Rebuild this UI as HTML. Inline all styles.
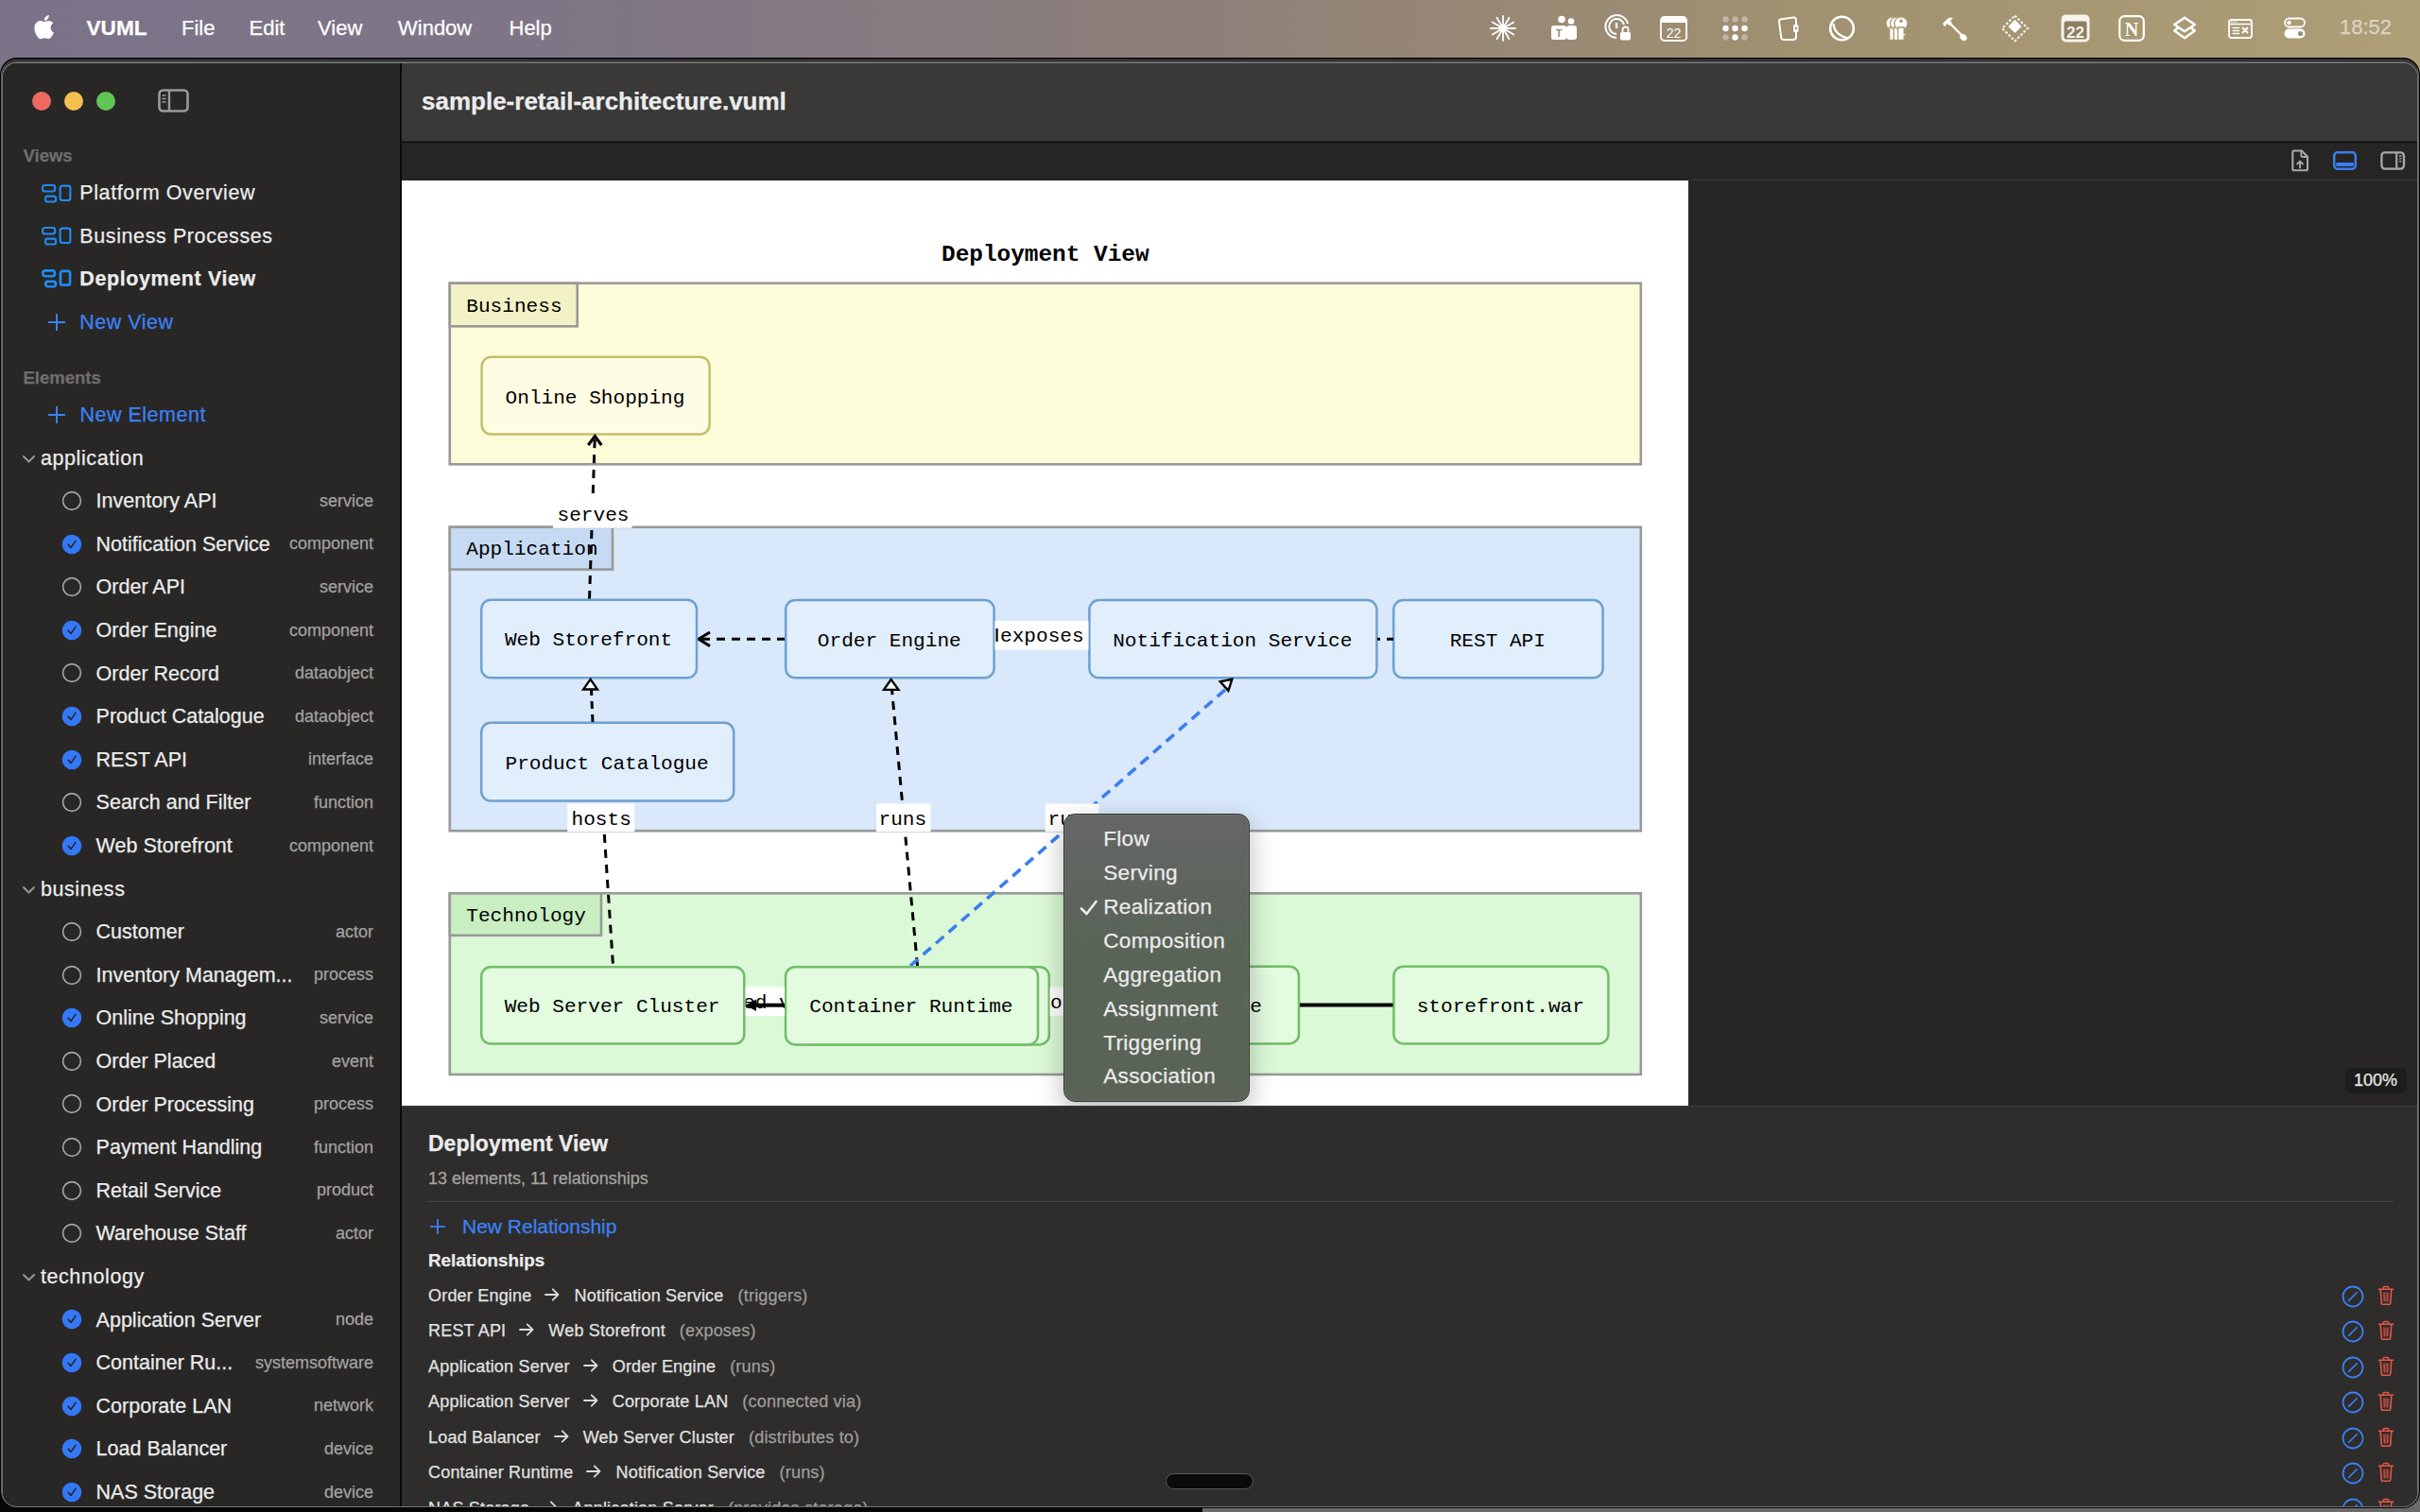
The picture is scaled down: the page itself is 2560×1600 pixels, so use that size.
<!DOCTYPE html><html><head><meta charset="utf-8"><title>VUML</title><style>
html,body{margin:0;padding:0;}
body{width:2560px;height:1600px;overflow:hidden;position:relative;background:#6b6b6b;font-family:"Liberation Sans",sans-serif;}
.t{position:absolute;white-space:pre;-webkit-text-stroke:0.25px currentColor;}
.r{position:absolute;box-sizing:border-box;}
svg{position:absolute;overflow:visible;}
</style></head><body>
<div class="r" style="left:0px;top:0px;width:2560px;height:90px;background:linear-gradient(90deg,#7a7388 0%,#7f7686 25%,#8e8079 50%,#a19170 75%,#ae9f77 100%);"></div>
<svg style="left:34px;top:15px" width="24" height="27" viewBox="0 0 24 27"><path fill="#fff" d="M19.6 14.3c0-3.2 2.6-4.7 2.7-4.8-1.5-2.2-3.8-2.5-4.6-2.5-2-.2-3.8 1.2-4.8 1.2-1 0-2.5-1.1-4.2-1.1-2.1 0-4.1 1.3-5.2 3.2-2.2 3.9-.6 9.6 1.6 12.7 1.1 1.5 2.3 3.2 4 3.2 1.6-.1 2.2-1 4.1-1s2.5 1 4.2 1c1.7 0 2.8-1.6 3.8-3.1 1.2-1.8 1.7-3.5 1.7-3.6 0 0-3.3-1.3-3.3-5.2zM16.5 5c.9-1.1 1.5-2.5 1.3-4-1.3.1-2.8.9-3.7 1.9-.8.9-1.5 2.4-1.3 3.9 1.4.1 2.8-.7 3.7-1.8z"/></svg>
<div class="t" style="top:17.35px;font-size:22.6px;line-height:1.117;color:#fff;font-weight:700;font-family:'Liberation Sans', sans-serif;left:91.50px;">VUML</div>
<div class="t" style="top:17.89px;font-size:22px;line-height:1.117;color:#fff;font-weight:400;font-family:'Liberation Sans', sans-serif;left:192.00px;">File</div>
<div class="t" style="top:17.89px;font-size:22px;line-height:1.117;color:#fff;font-weight:400;font-family:'Liberation Sans', sans-serif;left:263.50px;">Edit</div>
<div class="t" style="top:17.89px;font-size:22px;line-height:1.117;color:#fff;font-weight:400;font-family:'Liberation Sans', sans-serif;left:336.00px;">View</div>
<div class="t" style="top:17.89px;font-size:22px;line-height:1.117;color:#fff;font-weight:400;font-family:'Liberation Sans', sans-serif;left:421.00px;">Window</div>
<div class="t" style="top:17.89px;font-size:22px;line-height:1.117;color:#fff;font-weight:400;font-family:'Liberation Sans', sans-serif;left:538.50px;">Help</div>
<div class="t" style="top:16.79px;font-size:22px;line-height:1.117;color:rgba(255,255,255,0.55);font-weight:400;font-family:'Liberation Sans', sans-serif;right:30.00px;text-align:right;">18:52</div>
<div class="r" style="left:0px;top:1540px;width:1272px;height:60px;background:#060606;"></div>
<div class="r" style="left:0px;top:61px;width:2560px;height:1535px;background:#050505;border-radius:18px 18px 18px 18px;"></div>
<div class="r" style="left:1px;top:62.6px;width:2557.5px;height:1532px;background:#626262;border-radius:17px;"></div>
<div class="r" style="left:2px;top:63.6px;width:2556px;height:1530.9px;background:#080808;border-radius:16px;"></div>
<div class="r" style="left:2px;top:65.2px;width:2556px;height:1529.8px;background:#707070;border-radius:16px;"></div>
<div style="position:absolute;left:3px;top:67px;width:2554px;height:1527px;border-radius:15px;overflow:hidden;background:#282726;">
<div style="position:absolute;left:-3px;top:-67px;width:2560px;height:1600px;">
<div class="r" style="left:0px;top:0px;width:423px;height:1600px;background:#282726;"></div>
<div class="r" style="left:423px;top:60px;width:2px;height:1540px;background:#0a0a0a;"></div>
<div class="r" style="left:34px;top:97px;width:20px;height:20px;border-radius:50%;background:#ec6a5f;"></div>
<div class="r" style="left:68px;top:97px;width:20px;height:20px;border-radius:50%;background:#f4bf4f;"></div>
<div class="r" style="left:102px;top:97px;width:20px;height:20px;border-radius:50%;background:#61c555;"></div>
<svg style="left:166px;top:93px" width="36" height="28" viewBox="0 0 36 28"><rect x="2.5" y="2.5" width="30" height="22" rx="4" fill="none" stroke="#9b9b9b" stroke-width="2.6"/><line x1="13" y1="2.5" x2="13" y2="24.5" stroke="#9b9b9b" stroke-width="2.4"/><line x1="5.5" y1="8" x2="9.5" y2="8" stroke="#9b9b9b" stroke-width="1.6"/><line x1="5.5" y1="11.5" x2="9.5" y2="11.5" stroke="#9b9b9b" stroke-width="1.6"/><line x1="5.5" y1="15" x2="9.5" y2="15" stroke="#9b9b9b" stroke-width="1.6"/></svg>
<div class="t" style="top:155.06px;font-size:18.5px;line-height:1.117;color:#6f6e6d;font-weight:700;font-family:'Liberation Sans', sans-serif;left:24.50px;">Views</div>
<svg style="left:43.8px;top:194.6px" width="34" height="22" viewBox="0 0 34 22"><rect x="1.05" y="1.05" width="13.10" height="6.50" rx="2.2" fill="none" stroke="#1f8bf5" stroke-width="2.1"/><rect x="4.05" y="12.65" width="11.10" height="5.90" rx="2.2" fill="none" stroke="#1f8bf5" stroke-width="2.1"/><rect x="19.65" y="1.65" width="10.70" height="15.30" rx="2.2" fill="none" stroke="#1f8bf5" stroke-width="2.1"/></svg>
<div class="t" style="top:192.44px;font-size:21.5px;line-height:1.117;color:#ececec;font-weight:400;font-family:'Liberation Sans', sans-serif;letter-spacing:0.6px;left:84.30px;">Platform Overview</div>
<svg style="left:43.8px;top:240.0px" width="34" height="22" viewBox="0 0 34 22"><rect x="1.05" y="1.05" width="13.10" height="6.50" rx="2.2" fill="none" stroke="#1f8bf5" stroke-width="2.1"/><rect x="4.05" y="12.65" width="11.10" height="5.90" rx="2.2" fill="none" stroke="#1f8bf5" stroke-width="2.1"/><rect x="19.65" y="1.65" width="10.70" height="15.30" rx="2.2" fill="none" stroke="#1f8bf5" stroke-width="2.1"/></svg>
<div class="t" style="top:237.84px;font-size:21.5px;line-height:1.117;color:#ececec;font-weight:400;font-family:'Liberation Sans', sans-serif;letter-spacing:0.6px;left:84.30px;">Business Processes</div>
<svg style="left:43.8px;top:285.4px" width="34" height="22" viewBox="0 0 34 22"><rect x="1.35" y="1.35" width="12.50" height="5.90" rx="2.2" fill="none" stroke="#1f8bf5" stroke-width="2.7"/><rect x="4.35" y="12.95" width="10.50" height="5.30" rx="2.2" fill="none" stroke="#1f8bf5" stroke-width="2.7"/><rect x="19.95" y="1.95" width="10.10" height="14.70" rx="2.2" fill="none" stroke="#1f8bf5" stroke-width="2.7"/></svg>
<div class="t" style="top:283.24px;font-size:21.5px;line-height:1.117;color:#ececec;font-weight:700;font-family:'Liberation Sans', sans-serif;letter-spacing:0.6px;left:84.30px;">Deployment View</div>
<svg style="left:51px;top:332.0px" width="18" height="18" viewBox="0 0 18 18"><line x1="9.0" y1="0" x2="9.0" y2="18" stroke="#3b82f6" stroke-width="2"/><line x1="0" y1="9.0" x2="18" y2="9.0" stroke="#3b82f6" stroke-width="2"/></svg>
<div class="t" style="top:329.04px;font-size:21.5px;line-height:1.117;color:#3b82f6;font-weight:400;font-family:'Liberation Sans', sans-serif;letter-spacing:0.5px;left:84.30px;">New View</div>
<div class="t" style="top:390.06px;font-size:18.5px;line-height:1.117;color:#6f6e6d;font-weight:700;font-family:'Liberation Sans', sans-serif;left:24.50px;">Elements</div>
<svg style="left:51px;top:429.5px" width="18" height="18" viewBox="0 0 18 18"><line x1="9.0" y1="0" x2="9.0" y2="18" stroke="#3b82f6" stroke-width="2"/><line x1="0" y1="9.0" x2="18" y2="9.0" stroke="#3b82f6" stroke-width="2"/></svg>
<div class="t" style="top:426.54px;font-size:21.5px;line-height:1.117;color:#3b82f6;font-weight:400;font-family:'Liberation Sans', sans-serif;letter-spacing:0.5px;left:84.50px;">New Element</div>
<svg style="left:23px;top:481.0px" width="16" height="10" viewBox="0 0 16 10"><polyline points="2,2 7.5,7.5 13,2" fill="none" stroke="#9a9a9a" stroke-width="1.9" stroke-linecap="round" stroke-linejoin="round"/></svg>
<div class="t" style="top:472.54px;font-size:21.5px;line-height:1.117;color:#ececec;font-weight:400;font-family:'Liberation Sans', sans-serif;letter-spacing:0.6px;left:42.90px;">application</div>
<svg style="left:65px;top:519.0px" width="22" height="22" viewBox="0 0 22 22"><circle cx="11" cy="11" r="9.4" fill="none" stroke="#a6a6a6" stroke-width="1.6"/></svg>
<div class="t" style="top:518.14px;font-size:21.5px;line-height:1.117;color:#ececec;font-weight:400;font-family:'Liberation Sans', sans-serif;left:101.60px;">Inventory API</div>
<div class="t" style="top:519.81px;font-size:18px;line-height:1.117;color:#a3a2a1;font-weight:400;font-family:'Liberation Sans', sans-serif;right:2165.00px;text-align:right;">service</div>
<svg style="left:65px;top:564.6px" width="22" height="22" viewBox="0 0 22 22"><circle cx="11" cy="11" r="10.3" fill="#3478f6"/><polyline points="7.2,11.4 10.1,14.4 15,7.4" fill="none" stroke="#262524" stroke-width="1.6" stroke-linecap="round" stroke-linejoin="round"/></svg>
<div class="t" style="top:563.74px;font-size:21.5px;line-height:1.117;color:#ececec;font-weight:400;font-family:'Liberation Sans', sans-serif;left:101.60px;">Notification Service</div>
<div class="t" style="top:565.41px;font-size:18px;line-height:1.117;color:#a3a2a1;font-weight:400;font-family:'Liberation Sans', sans-serif;right:2165.00px;text-align:right;">component</div>
<svg style="left:65px;top:610.2px" width="22" height="22" viewBox="0 0 22 22"><circle cx="11" cy="11" r="9.4" fill="none" stroke="#a6a6a6" stroke-width="1.6"/></svg>
<div class="t" style="top:609.34px;font-size:21.5px;line-height:1.117;color:#ececec;font-weight:400;font-family:'Liberation Sans', sans-serif;left:101.60px;">Order API</div>
<div class="t" style="top:611.01px;font-size:18px;line-height:1.117;color:#a3a2a1;font-weight:400;font-family:'Liberation Sans', sans-serif;right:2165.00px;text-align:right;">service</div>
<svg style="left:65px;top:655.8px" width="22" height="22" viewBox="0 0 22 22"><circle cx="11" cy="11" r="10.3" fill="#3478f6"/><polyline points="7.2,11.4 10.1,14.4 15,7.4" fill="none" stroke="#262524" stroke-width="1.6" stroke-linecap="round" stroke-linejoin="round"/></svg>
<div class="t" style="top:654.94px;font-size:21.5px;line-height:1.117;color:#ececec;font-weight:400;font-family:'Liberation Sans', sans-serif;left:101.60px;">Order Engine</div>
<div class="t" style="top:656.61px;font-size:18px;line-height:1.117;color:#a3a2a1;font-weight:400;font-family:'Liberation Sans', sans-serif;right:2165.00px;text-align:right;">component</div>
<svg style="left:65px;top:701.4px" width="22" height="22" viewBox="0 0 22 22"><circle cx="11" cy="11" r="9.4" fill="none" stroke="#a6a6a6" stroke-width="1.6"/></svg>
<div class="t" style="top:700.54px;font-size:21.5px;line-height:1.117;color:#ececec;font-weight:400;font-family:'Liberation Sans', sans-serif;left:101.60px;">Order Record</div>
<div class="t" style="top:702.21px;font-size:18px;line-height:1.117;color:#a3a2a1;font-weight:400;font-family:'Liberation Sans', sans-serif;right:2165.00px;text-align:right;">dataobject</div>
<svg style="left:65px;top:747.0px" width="22" height="22" viewBox="0 0 22 22"><circle cx="11" cy="11" r="10.3" fill="#3478f6"/><polyline points="7.2,11.4 10.1,14.4 15,7.4" fill="none" stroke="#262524" stroke-width="1.6" stroke-linecap="round" stroke-linejoin="round"/></svg>
<div class="t" style="top:746.14px;font-size:21.5px;line-height:1.117;color:#ececec;font-weight:400;font-family:'Liberation Sans', sans-serif;left:101.60px;">Product Catalogue</div>
<div class="t" style="top:747.81px;font-size:18px;line-height:1.117;color:#a3a2a1;font-weight:400;font-family:'Liberation Sans', sans-serif;right:2165.00px;text-align:right;">dataobject</div>
<svg style="left:65px;top:792.6px" width="22" height="22" viewBox="0 0 22 22"><circle cx="11" cy="11" r="10.3" fill="#3478f6"/><polyline points="7.2,11.4 10.1,14.4 15,7.4" fill="none" stroke="#262524" stroke-width="1.6" stroke-linecap="round" stroke-linejoin="round"/></svg>
<div class="t" style="top:791.74px;font-size:21.5px;line-height:1.117;color:#ececec;font-weight:400;font-family:'Liberation Sans', sans-serif;left:101.60px;">REST API</div>
<div class="t" style="top:793.41px;font-size:18px;line-height:1.117;color:#a3a2a1;font-weight:400;font-family:'Liberation Sans', sans-serif;right:2165.00px;text-align:right;">interface</div>
<svg style="left:65px;top:838.2px" width="22" height="22" viewBox="0 0 22 22"><circle cx="11" cy="11" r="9.4" fill="none" stroke="#a6a6a6" stroke-width="1.6"/></svg>
<div class="t" style="top:837.34px;font-size:21.5px;line-height:1.117;color:#ececec;font-weight:400;font-family:'Liberation Sans', sans-serif;left:101.60px;">Search and Filter</div>
<div class="t" style="top:839.01px;font-size:18px;line-height:1.117;color:#a3a2a1;font-weight:400;font-family:'Liberation Sans', sans-serif;right:2165.00px;text-align:right;">function</div>
<svg style="left:65px;top:883.8px" width="22" height="22" viewBox="0 0 22 22"><circle cx="11" cy="11" r="10.3" fill="#3478f6"/><polyline points="7.2,11.4 10.1,14.4 15,7.4" fill="none" stroke="#262524" stroke-width="1.6" stroke-linecap="round" stroke-linejoin="round"/></svg>
<div class="t" style="top:882.94px;font-size:21.5px;line-height:1.117;color:#ececec;font-weight:400;font-family:'Liberation Sans', sans-serif;left:101.60px;">Web Storefront</div>
<div class="t" style="top:884.61px;font-size:18px;line-height:1.117;color:#a3a2a1;font-weight:400;font-family:'Liberation Sans', sans-serif;right:2165.00px;text-align:right;">component</div>
<svg style="left:23px;top:937.0px" width="16" height="10" viewBox="0 0 16 10"><polyline points="2,2 7.5,7.5 13,2" fill="none" stroke="#9a9a9a" stroke-width="1.9" stroke-linecap="round" stroke-linejoin="round"/></svg>
<div class="t" style="top:928.54px;font-size:21.5px;line-height:1.117;color:#ececec;font-weight:400;font-family:'Liberation Sans', sans-serif;letter-spacing:0.6px;left:42.90px;">business</div>
<svg style="left:65px;top:975.0px" width="22" height="22" viewBox="0 0 22 22"><circle cx="11" cy="11" r="9.4" fill="none" stroke="#a6a6a6" stroke-width="1.6"/></svg>
<div class="t" style="top:974.14px;font-size:21.5px;line-height:1.117;color:#ececec;font-weight:400;font-family:'Liberation Sans', sans-serif;left:101.60px;">Customer</div>
<div class="t" style="top:975.81px;font-size:18px;line-height:1.117;color:#a3a2a1;font-weight:400;font-family:'Liberation Sans', sans-serif;right:2165.00px;text-align:right;">actor</div>
<svg style="left:65px;top:1020.6px" width="22" height="22" viewBox="0 0 22 22"><circle cx="11" cy="11" r="9.4" fill="none" stroke="#a6a6a6" stroke-width="1.6"/></svg>
<div class="t" style="top:1019.74px;font-size:21.5px;line-height:1.117;color:#ececec;font-weight:400;font-family:'Liberation Sans', sans-serif;left:101.60px;">Inventory Managem...</div>
<div class="t" style="top:1021.41px;font-size:18px;line-height:1.117;color:#a3a2a1;font-weight:400;font-family:'Liberation Sans', sans-serif;right:2165.00px;text-align:right;">process</div>
<svg style="left:65px;top:1066.2px" width="22" height="22" viewBox="0 0 22 22"><circle cx="11" cy="11" r="10.3" fill="#3478f6"/><polyline points="7.2,11.4 10.1,14.4 15,7.4" fill="none" stroke="#262524" stroke-width="1.6" stroke-linecap="round" stroke-linejoin="round"/></svg>
<div class="t" style="top:1065.34px;font-size:21.5px;line-height:1.117;color:#ececec;font-weight:400;font-family:'Liberation Sans', sans-serif;left:101.60px;">Online Shopping</div>
<div class="t" style="top:1067.01px;font-size:18px;line-height:1.117;color:#a3a2a1;font-weight:400;font-family:'Liberation Sans', sans-serif;right:2165.00px;text-align:right;">service</div>
<svg style="left:65px;top:1111.8px" width="22" height="22" viewBox="0 0 22 22"><circle cx="11" cy="11" r="9.4" fill="none" stroke="#a6a6a6" stroke-width="1.6"/></svg>
<div class="t" style="top:1110.94px;font-size:21.5px;line-height:1.117;color:#ececec;font-weight:400;font-family:'Liberation Sans', sans-serif;left:101.60px;">Order Placed</div>
<div class="t" style="top:1112.61px;font-size:18px;line-height:1.117;color:#a3a2a1;font-weight:400;font-family:'Liberation Sans', sans-serif;right:2165.00px;text-align:right;">event</div>
<svg style="left:65px;top:1157.4px" width="22" height="22" viewBox="0 0 22 22"><circle cx="11" cy="11" r="9.4" fill="none" stroke="#a6a6a6" stroke-width="1.6"/></svg>
<div class="t" style="top:1156.54px;font-size:21.5px;line-height:1.117;color:#ececec;font-weight:400;font-family:'Liberation Sans', sans-serif;left:101.60px;">Order Processing</div>
<div class="t" style="top:1158.21px;font-size:18px;line-height:1.117;color:#a3a2a1;font-weight:400;font-family:'Liberation Sans', sans-serif;right:2165.00px;text-align:right;">process</div>
<svg style="left:65px;top:1203.0px" width="22" height="22" viewBox="0 0 22 22"><circle cx="11" cy="11" r="9.4" fill="none" stroke="#a6a6a6" stroke-width="1.6"/></svg>
<div class="t" style="top:1202.14px;font-size:21.5px;line-height:1.117;color:#ececec;font-weight:400;font-family:'Liberation Sans', sans-serif;left:101.60px;">Payment Handling</div>
<div class="t" style="top:1203.81px;font-size:18px;line-height:1.117;color:#a3a2a1;font-weight:400;font-family:'Liberation Sans', sans-serif;right:2165.00px;text-align:right;">function</div>
<svg style="left:65px;top:1248.6px" width="22" height="22" viewBox="0 0 22 22"><circle cx="11" cy="11" r="9.4" fill="none" stroke="#a6a6a6" stroke-width="1.6"/></svg>
<div class="t" style="top:1247.74px;font-size:21.5px;line-height:1.117;color:#ececec;font-weight:400;font-family:'Liberation Sans', sans-serif;left:101.60px;">Retail Service</div>
<div class="t" style="top:1249.41px;font-size:18px;line-height:1.117;color:#a3a2a1;font-weight:400;font-family:'Liberation Sans', sans-serif;right:2165.00px;text-align:right;">product</div>
<svg style="left:65px;top:1294.2px" width="22" height="22" viewBox="0 0 22 22"><circle cx="11" cy="11" r="9.4" fill="none" stroke="#a6a6a6" stroke-width="1.6"/></svg>
<div class="t" style="top:1293.34px;font-size:21.5px;line-height:1.117;color:#ececec;font-weight:400;font-family:'Liberation Sans', sans-serif;left:101.60px;">Warehouse Staff</div>
<div class="t" style="top:1295.01px;font-size:18px;line-height:1.117;color:#a3a2a1;font-weight:400;font-family:'Liberation Sans', sans-serif;right:2165.00px;text-align:right;">actor</div>
<svg style="left:23px;top:1347.4px" width="16" height="10" viewBox="0 0 16 10"><polyline points="2,2 7.5,7.5 13,2" fill="none" stroke="#9a9a9a" stroke-width="1.9" stroke-linecap="round" stroke-linejoin="round"/></svg>
<div class="t" style="top:1338.94px;font-size:21.5px;line-height:1.117;color:#ececec;font-weight:400;font-family:'Liberation Sans', sans-serif;letter-spacing:0.6px;left:42.90px;">technology</div>
<svg style="left:65px;top:1385.4px" width="22" height="22" viewBox="0 0 22 22"><circle cx="11" cy="11" r="10.3" fill="#3478f6"/><polyline points="7.2,11.4 10.1,14.4 15,7.4" fill="none" stroke="#262524" stroke-width="1.6" stroke-linecap="round" stroke-linejoin="round"/></svg>
<div class="t" style="top:1384.54px;font-size:21.5px;line-height:1.117;color:#ececec;font-weight:400;font-family:'Liberation Sans', sans-serif;left:101.60px;">Application Server</div>
<div class="t" style="top:1386.21px;font-size:18px;line-height:1.117;color:#a3a2a1;font-weight:400;font-family:'Liberation Sans', sans-serif;right:2165.00px;text-align:right;">node</div>
<svg style="left:65px;top:1431.0px" width="22" height="22" viewBox="0 0 22 22"><circle cx="11" cy="11" r="10.3" fill="#3478f6"/><polyline points="7.2,11.4 10.1,14.4 15,7.4" fill="none" stroke="#262524" stroke-width="1.6" stroke-linecap="round" stroke-linejoin="round"/></svg>
<div class="t" style="top:1430.14px;font-size:21.5px;line-height:1.117;color:#ececec;font-weight:400;font-family:'Liberation Sans', sans-serif;left:101.60px;">Container Ru...</div>
<div class="t" style="top:1431.81px;font-size:18px;line-height:1.117;color:#a3a2a1;font-weight:400;font-family:'Liberation Sans', sans-serif;right:2165.00px;text-align:right;">systemsoftware</div>
<svg style="left:65px;top:1476.6px" width="22" height="22" viewBox="0 0 22 22"><circle cx="11" cy="11" r="10.3" fill="#3478f6"/><polyline points="7.2,11.4 10.1,14.4 15,7.4" fill="none" stroke="#262524" stroke-width="1.6" stroke-linecap="round" stroke-linejoin="round"/></svg>
<div class="t" style="top:1475.74px;font-size:21.5px;line-height:1.117;color:#ececec;font-weight:400;font-family:'Liberation Sans', sans-serif;left:101.60px;">Corporate LAN</div>
<div class="t" style="top:1477.41px;font-size:18px;line-height:1.117;color:#a3a2a1;font-weight:400;font-family:'Liberation Sans', sans-serif;right:2165.00px;text-align:right;">network</div>
<svg style="left:65px;top:1522.2px" width="22" height="22" viewBox="0 0 22 22"><circle cx="11" cy="11" r="10.3" fill="#3478f6"/><polyline points="7.2,11.4 10.1,14.4 15,7.4" fill="none" stroke="#262524" stroke-width="1.6" stroke-linecap="round" stroke-linejoin="round"/></svg>
<div class="t" style="top:1521.34px;font-size:21.5px;line-height:1.117;color:#ececec;font-weight:400;font-family:'Liberation Sans', sans-serif;left:101.60px;">Load Balancer</div>
<div class="t" style="top:1523.01px;font-size:18px;line-height:1.117;color:#a3a2a1;font-weight:400;font-family:'Liberation Sans', sans-serif;right:2165.00px;text-align:right;">device</div>
<svg style="left:65px;top:1567.8px" width="22" height="22" viewBox="0 0 22 22"><circle cx="11" cy="11" r="10.3" fill="#3478f6"/><polyline points="7.2,11.4 10.1,14.4 15,7.4" fill="none" stroke="#262524" stroke-width="1.6" stroke-linecap="round" stroke-linejoin="round"/></svg>
<div class="t" style="top:1566.94px;font-size:21.5px;line-height:1.117;color:#ececec;font-weight:400;font-family:'Liberation Sans', sans-serif;left:101.60px;">NAS Storage</div>
<div class="t" style="top:1568.61px;font-size:18px;line-height:1.117;color:#a3a2a1;font-weight:400;font-family:'Liberation Sans', sans-serif;right:2165.00px;text-align:right;">device</div>
<div class="r" style="left:425px;top:0px;width:2140px;height:149px;background:#3a3938;"></div>
<div class="r" style="left:425px;top:149.5px;width:2140px;height:1.5px;background:#070707;"></div>
<div class="t" style="top:92.57px;font-size:26px;line-height:1.117;color:#ececec;font-weight:700;font-family:'Liberation Sans', sans-serif;left:446.00px;">sample-retail-architecture.vuml</div>
<div class="r" style="left:425px;top:151px;width:2140px;height:39px;background:#262524;"></div>
<svg style="left:2420px;top:156px" width="28" height="28" viewBox="0 0 28 28"><path d="M5.3 5 Q5.3 3.5 6.8 3.5 H14.8 L21 9.7 V22.8 Q21 24.3 19.5 24.3 H6.8 Q5.3 24.3 5.3 22.8 Z" fill="none" stroke="#aaaaaa" stroke-width="2.1" stroke-linejoin="round"/><path d="M14.3 3.8 V8.6 Q14.3 10 15.7 10 H20.7" fill="none" stroke="#aaaaaa" stroke-width="1.9"/><path d="M13.1 21.5 V14.8 M10.1 17.6 L13.1 14.6 L16.1 17.6" fill="none" stroke="#aaaaaa" stroke-width="1.9" stroke-linecap="round" stroke-linejoin="round"/></svg>
<svg style="left:2466px;top:158px" width="30" height="24" viewBox="0 0 30 24"><rect x="3.2" y="3.3" width="22.6" height="17.4" rx="3.5" fill="none" stroke="#3a7ff0" stroke-width="2.5"/><rect x="5.2" y="14.1" width="18.6" height="4" rx="0.8" fill="#3a7ff0"/></svg>
<svg style="left:2516px;top:158px" width="32" height="24" viewBox="0 0 32 24"><rect x="3.4" y="3.4" width="23.6" height="17.2" rx="3.5" fill="none" stroke="#aaaaaa" stroke-width="2.3"/><line x1="19.2" y1="3.2" x2="19.2" y2="20.8" stroke="#aaaaaa" stroke-width="2.1"/><line x1="22" y1="7" x2="24.5" y2="7" stroke="#aaaaaa" stroke-width="1.3"/><line x1="22" y1="9.8" x2="24.5" y2="9.8" stroke="#aaaaaa" stroke-width="1.3"/><line x1="22" y1="12.6" x2="24.5" y2="12.6" stroke="#aaaaaa" stroke-width="1.3"/></svg>
<div class="r" style="left:1786px;top:189.8px;width:780px;height:980.2px;background:#272625;border-top:1.5px solid #3b3a39;"></div>
<div class="r" style="left:2481px;top:1130px;width:65px;height:27px;border-radius:6px;background:#1d1c1c;"></div>
<div class="t" style="top:1133.21px;font-size:18px;line-height:1.117;color:#e8e8e8;font-weight:400;font-family:'Liberation Sans', sans-serif;left:2490.00px;">100%</div>
<div class="r" style="left:425px;top:190.8px;width:1361px;height:979.2px;background:#ffffff;"></div>
<svg style="left:425px;top:190px" width="1361" height="980" viewBox="425 190 1361 980">
<style>.m{font-family:"Liberation Mono",monospace;font-size:21.1px;fill:#000;}</style>
<text x="996" y="276" style="font-family:'Liberation Mono',monospace;font-size:24.4px;font-weight:700;fill:#000">Deployment View</text>
<rect x="475.8" y="299.7" width="1260.0" height="191.60000000000002" fill="#fdfcd9" stroke="#999999" stroke-width="2.6"/>
<rect x="475.8" y="299.7" width="134.90000000000003" height="45.60000000000002" fill="#f3f1c6" stroke="#999999" stroke-width="2.6"/>
<text x="493.3" y="330" class="m">Business</text>
<rect x="475.8" y="557.8" width="1260.0" height="321.4000000000001" fill="#d9e8fa" stroke="#999999" stroke-width="2.6"/>
<rect x="475.8" y="557.8" width="172.2" height="44.80000000000007" fill="#c6dbf3" stroke="#999999" stroke-width="2.6"/>
<text x="493.3" y="586.7" class="m">Application</text>
<rect x="475.8" y="945.3" width="1260.0" height="191.70000000000005" fill="#dcf9d7" stroke="#999999" stroke-width="2.6"/>
<rect x="475.8" y="945.3" width="160.2" height="44.5" fill="#c8eec2" stroke="#999999" stroke-width="2.6"/>
<text x="493.3" y="975.2" class="m">Technology</text>
<rect x="509.6" y="377.8" width="241.0" height="81.80000000000001" rx="10" ry="10" fill="#fefde4" stroke="#c3bf6b" stroke-width="2.5"/>
<text x="629.5" y="427.3" class="m" text-anchor="middle">Online Shopping</text>
<line x1="623.5" y1="634" x2="629.3" y2="462" stroke="#000" stroke-width="3" stroke-dasharray="9 7"/>
<polyline points="622.3,471 629.3,461.5 636.3,471" fill="none" stroke="#000" stroke-width="3"/>
<rect x="585" y="527" width="83.5" height="31.799999999999955" fill="#ffffff"/>
<text x="589.5" y="550.6" class="m">serves</text>
<line x1="831" y1="676.3" x2="740" y2="676.3" stroke="#000" stroke-width="3" stroke-dasharray="9 7"/>
<polyline points="751,669 739,676.3 751,683.6" fill="none" stroke="#000" stroke-width="3"/>
<rect x="509.2" y="634.8" width="227.8" height="82.40000000000009" rx="10" ry="10" fill="#e1eefc" stroke="#6ea0d0" stroke-width="2.5"/>
<text x="622.5" y="683.3" class="m" text-anchor="middle">Web Storefront</text>
<rect x="831.2" y="634.9" width="220.39999999999986" height="82.39999999999998" rx="10" ry="10" fill="#e1eefc" stroke="#6ea0d0" stroke-width="2.5"/>
<text x="940.8" y="683.6" class="m" text-anchor="middle">Order Engine</text>
<rect x="1152.4" y="635.1" width="304.0" height="82.19999999999993" rx="10" ry="10" fill="#e1eefc" stroke="#6ea0d0" stroke-width="2.5"/>
<text x="1303.8" y="683.6" class="m" text-anchor="middle">Notification Service</text>
<rect x="1474.2" y="635.1" width="221.39999999999986" height="82.19999999999993" rx="10" ry="10" fill="#e1eefc" stroke="#6ea0d0" stroke-width="2.5"/>
<text x="1584.3" y="683.6" class="m" text-anchor="middle">REST API</text>
<rect x="509.2" y="764.8" width="267.00000000000006" height="82.80000000000007" rx="10" ry="10" fill="#e1eefc" stroke="#6ea0d0" stroke-width="2.5"/>
<text x="642.1" y="814" class="m" text-anchor="middle">Product Catalogue</text>
<line x1="1457" y1="676.3" x2="1460" y2="676.3" stroke="#000" stroke-width="3"/>
<line x1="1467" y1="676.3" x2="1474" y2="676.3" stroke="#000" stroke-width="3"/>
<rect x="1052.4" y="656.9" width="99.0" height="30.600000000000023" fill="#ffffff"/>
<text x="1058" y="678.9" class="m">exposes</text>
<rect x="1053.5" y="665" width="2.2" height="13.9" fill="#000"/>
<line x1="627" y1="764" x2="625.5" y2="730" stroke="#000" stroke-width="3" stroke-dasharray="8 6"/>
<polygon points="624.6,718.8 617,729.5 632,729.5" fill="#fff" stroke="#000" stroke-width="2.3" stroke-linejoin="miter"/>
<line x1="637.2" y1="851" x2="648.5" y2="1022" stroke="#000" stroke-width="3" stroke-dasharray="9 7"/>
<rect x="600.3" y="850.5" width="71.0" height="29.700000000000045" fill="#ffffff"/>
<text x="604.5" y="872.8" class="m">hosts</text>
<line x1="970.5" y1="1022" x2="943.5" y2="730" stroke="#000" stroke-width="3" stroke-dasharray="9 7"/>
<polygon points="942.6,719 935,729.8 950.5,729.8" fill="#fff" stroke="#000" stroke-width="2.3" stroke-linejoin="miter"/>
<rect x="927" y="850.5" width="57.60000000000002" height="29.700000000000045" fill="#ffffff"/>
<text x="929.5" y="872.8" class="m">runs</text>
<line x1="963" y1="1022" x2="1297" y2="729" stroke="#3a7ff0" stroke-width="3.6" stroke-dasharray="11 7"/>
<rect x="1105.7" y="850.5" width="56.700000000000045" height="29.700000000000045" fill="#ffffff"/>
<text x="1108.5" y="872.8" class="m">runs</text>
<polygon points="1303.3,718.8 1290.8,721.3 1299.4,730.9" fill="#fff" stroke="#000" stroke-width="2.4"/>
<rect x="509.2" y="1023.2" width="278.09999999999997" height="81.39999999999986" rx="10" ry="10" fill="#e3fbdf" stroke="#72bd69" stroke-width="2.5"/>
<text x="647.6" y="1070.7" class="m" text-anchor="middle">Web Server Cluster</text>
<rect x="842.5" y="1023.2" width="267.29999999999995" height="82.20000000000005" rx="10" ry="10" fill="#e3fbdf" stroke="#72bd69" stroke-width="2.5"/>
<rect x="831" y="1023.2" width="267" height="82.20000000000005" rx="10" ry="10" fill="#e3fbdf" stroke="#72bd69" stroke-width="2.5"/>
<text x="963.9" y="1070.7" class="m" text-anchor="middle">Container Runtime</text>
<rect x="1158" y="1022.8" width="216" height="81.60000000000014" rx="10" ry="10" fill="#e3fbdf" stroke="#72bd69" stroke-width="2.5"/>
<text x="1265.4" y="1070.6" class="m" text-anchor="middle">NAS Storage</text>
<rect x="1474.4" y="1022.8" width="227.0" height="81.60000000000014" rx="10" ry="10" fill="#e3fbdf" stroke="#72bd69" stroke-width="2.5"/>
<text x="1587.3" y="1070.6" class="m" text-anchor="middle">storefront.war</text>
<line x1="1375" y1="1063.5" x2="1473.5" y2="1063.5" stroke="#000" stroke-width="4"/>
<rect x="788.7" y="1044.1" width="41.299999999999955" height="30.90000000000009" fill="#ffffff"/>
<text x="786" y="1067" class="m" clip-path="url(#clipev)">ed v</text>
<clipPath id="clipev"><rect x="788.7" y="1040" width="41.3" height="40"/></clipPath>
<line x1="800" y1="1063.7" x2="830" y2="1063.7" stroke="#000" stroke-width="4"/>
<polygon points="788.7,1063.7 800,1057.6 800,1070" fill="#000"/>
<rect x="1110.6" y="1044.4" width="47.40000000000009" height="30.59999999999991" fill="#ffffff"/>
<text x="1111" y="1066.5" class="m">o</text>
</svg>
<div class="r" style="left:1125px;top:861px;width:196.5px;height:304.5px;border-radius:12px;background:linear-gradient(180deg,#646665 0%,#5e645d 28%,#586556 52%,#5a6356 100%);border:1px solid #2e302d;box-shadow:0 10px 28px rgba(0,0,0,0.28), inset 0 0 0 0.8px rgba(255,255,255,0.12);"></div>
<div class="t" style="top:875.35px;font-size:22.6px;line-height:1.117;color:#ececec;font-weight:400;font-family:'Liberation Sans', sans-serif;letter-spacing:0.3px;left:1167.20px;">Flow</div>
<div class="t" style="top:911.21px;font-size:22.6px;line-height:1.117;color:#ececec;font-weight:400;font-family:'Liberation Sans', sans-serif;letter-spacing:0.3px;left:1167.20px;">Serving</div>
<div class="t" style="top:947.07px;font-size:22.6px;line-height:1.117;color:#ececec;font-weight:400;font-family:'Liberation Sans', sans-serif;letter-spacing:0.3px;left:1167.20px;">Realization</div>
<div class="t" style="top:982.93px;font-size:22.6px;line-height:1.117;color:#ececec;font-weight:400;font-family:'Liberation Sans', sans-serif;letter-spacing:0.3px;left:1167.20px;">Composition</div>
<div class="t" style="top:1018.79px;font-size:22.6px;line-height:1.117;color:#ececec;font-weight:400;font-family:'Liberation Sans', sans-serif;letter-spacing:0.3px;left:1167.20px;">Aggregation</div>
<div class="t" style="top:1054.65px;font-size:22.6px;line-height:1.117;color:#ececec;font-weight:400;font-family:'Liberation Sans', sans-serif;letter-spacing:0.3px;left:1167.20px;">Assignment</div>
<div class="t" style="top:1090.51px;font-size:22.6px;line-height:1.117;color:#ececec;font-weight:400;font-family:'Liberation Sans', sans-serif;letter-spacing:0.3px;left:1167.20px;">Triggering</div>
<div class="t" style="top:1126.37px;font-size:22.6px;line-height:1.117;color:#ececec;font-weight:400;font-family:'Liberation Sans', sans-serif;letter-spacing:0.3px;left:1167.20px;">Association</div>
<svg style="left:1141px;top:951px" width="22" height="20" viewBox="0 0 22 20"><polyline points="3,10.5 8.5,16 18.5,3" fill="none" stroke="#ececec" stroke-width="2.6" stroke-linecap="round" stroke-linejoin="round"/></svg>
<div class="r" style="left:425px;top:1170px;width:2140px;height:430px;background:#2e2d2b;border-top:1.5px solid #403f3e;"></div>
<div class="t" style="top:1198.18px;font-size:23px;line-height:1.117;color:#ececec;font-weight:700;font-family:'Liberation Sans', sans-serif;left:453.00px;">Deployment View</div>
<div class="t" style="top:1236.81px;font-size:18px;line-height:1.117;color:#a5a4a3;font-weight:400;font-family:'Liberation Sans', sans-serif;left:453.00px;">13 elements, 11 relationships</div>
<div class="r" style="left:452px;top:1271px;width:2080px;height:1px;background:#454443;"></div>
<svg style="left:455px;top:1289.8px" width="16" height="16" viewBox="0 0 16 16"><line x1="8.0" y1="0" x2="8.0" y2="16" stroke="#3b82f6" stroke-width="1.8"/><line x1="0" y1="8.0" x2="16" y2="8.0" stroke="#3b82f6" stroke-width="1.8"/></svg>
<div class="t" style="top:1285.59px;font-size:21px;line-height:1.117;color:#3b82f6;font-weight:400;font-family:'Liberation Sans', sans-serif;left:489.00px;">New Relationship</div>
<div class="t" style="top:1323.49px;font-size:18.8px;line-height:1.117;color:#ececec;font-weight:700;font-family:'Liberation Sans', sans-serif;left:453.00px;">Relationships</div>
<div class="t" style="left:453px;top:1360.51px;font-size:18px;line-height:1.117;color:#e2e2e2;letter-spacing:0.2px;">Order Engine<svg style="position:relative;display:inline-block;vertical-align:baseline;margin:0 15px 0 14px;" width="16" height="14" viewBox="0 0 16 14"><path d="M1 7 H14.5 M8.8 1.3 L14.5 7 L8.8 12.7" fill="none" stroke="#dcdcdc" stroke-width="1.8" stroke-linecap="round" stroke-linejoin="round"/></svg>Notification Service<span style="color:#9f9e9d;margin-left:15px;">(triggers)</span></div>
<svg style="left:2476px;top:1358.8px" width="26" height="26" viewBox="0 0 26 26"><circle cx="13" cy="13" r="10.5" fill="none" stroke="#3a7ff0" stroke-width="1.8"/><line x1="8.6" y1="17.4" x2="16.3" y2="9.7" stroke="#3a7ff0" stroke-width="1.6" stroke-linecap="round"/><circle cx="17.2" cy="8.8" r="0.9" fill="#3a7ff0"/></svg>
<svg style="left:2513px;top:1358.8px" width="22" height="24" viewBox="0 0 22 24"><path d="M3.5 5.3 H18.5" stroke="#e5574a" stroke-width="1.6" stroke-linecap="round"/><path d="M8.2 5 V3.8 Q8.2 2.5 9.5 2.5 H12.5 Q13.8 2.5 13.8 3.8 V5" fill="none" stroke="#e5574a" stroke-width="1.4"/><path d="M5.2 5.6 L6.3 20.2 Q6.4 21.3 7.5 21.3 H14.5 Q15.6 21.3 15.7 20.2 L16.8 5.6" fill="none" stroke="#e5574a" stroke-width="1.6"/><line x1="9" y1="8.6" x2="9.2" y2="18.4" stroke="#e5574a" stroke-width="1.2"/><line x1="11" y1="8.6" x2="11" y2="18.4" stroke="#b8463c" stroke-width="1.2"/><line x1="13" y1="8.6" x2="12.8" y2="18.4" stroke="#e5574a" stroke-width="1.2"/></svg>
<div class="t" style="left:453px;top:1398.01px;font-size:18px;line-height:1.117;color:#e2e2e2;letter-spacing:0.2px;">REST API<svg style="position:relative;display:inline-block;vertical-align:baseline;margin:0 15px 0 14px;" width="16" height="14" viewBox="0 0 16 14"><path d="M1 7 H14.5 M8.8 1.3 L14.5 7 L8.8 12.7" fill="none" stroke="#dcdcdc" stroke-width="1.8" stroke-linecap="round" stroke-linejoin="round"/></svg>Web Storefront<span style="color:#9f9e9d;margin-left:15px;">(exposes)</span></div>
<svg style="left:2476px;top:1396.3px" width="26" height="26" viewBox="0 0 26 26"><circle cx="13" cy="13" r="10.5" fill="none" stroke="#3a7ff0" stroke-width="1.8"/><line x1="8.6" y1="17.4" x2="16.3" y2="9.7" stroke="#3a7ff0" stroke-width="1.6" stroke-linecap="round"/><circle cx="17.2" cy="8.8" r="0.9" fill="#3a7ff0"/></svg>
<svg style="left:2513px;top:1396.3px" width="22" height="24" viewBox="0 0 22 24"><path d="M3.5 5.3 H18.5" stroke="#e5574a" stroke-width="1.6" stroke-linecap="round"/><path d="M8.2 5 V3.8 Q8.2 2.5 9.5 2.5 H12.5 Q13.8 2.5 13.8 3.8 V5" fill="none" stroke="#e5574a" stroke-width="1.4"/><path d="M5.2 5.6 L6.3 20.2 Q6.4 21.3 7.5 21.3 H14.5 Q15.6 21.3 15.7 20.2 L16.8 5.6" fill="none" stroke="#e5574a" stroke-width="1.6"/><line x1="9" y1="8.6" x2="9.2" y2="18.4" stroke="#e5574a" stroke-width="1.2"/><line x1="11" y1="8.6" x2="11" y2="18.4" stroke="#b8463c" stroke-width="1.2"/><line x1="13" y1="8.6" x2="12.8" y2="18.4" stroke="#e5574a" stroke-width="1.2"/></svg>
<div class="t" style="left:453px;top:1435.51px;font-size:18px;line-height:1.117;color:#e2e2e2;letter-spacing:0.2px;">Application Server<svg style="position:relative;display:inline-block;vertical-align:baseline;margin:0 15px 0 14px;" width="16" height="14" viewBox="0 0 16 14"><path d="M1 7 H14.5 M8.8 1.3 L14.5 7 L8.8 12.7" fill="none" stroke="#dcdcdc" stroke-width="1.8" stroke-linecap="round" stroke-linejoin="round"/></svg>Order Engine<span style="color:#9f9e9d;margin-left:15px;">(runs)</span></div>
<svg style="left:2476px;top:1433.8px" width="26" height="26" viewBox="0 0 26 26"><circle cx="13" cy="13" r="10.5" fill="none" stroke="#3a7ff0" stroke-width="1.8"/><line x1="8.6" y1="17.4" x2="16.3" y2="9.7" stroke="#3a7ff0" stroke-width="1.6" stroke-linecap="round"/><circle cx="17.2" cy="8.8" r="0.9" fill="#3a7ff0"/></svg>
<svg style="left:2513px;top:1433.8px" width="22" height="24" viewBox="0 0 22 24"><path d="M3.5 5.3 H18.5" stroke="#e5574a" stroke-width="1.6" stroke-linecap="round"/><path d="M8.2 5 V3.8 Q8.2 2.5 9.5 2.5 H12.5 Q13.8 2.5 13.8 3.8 V5" fill="none" stroke="#e5574a" stroke-width="1.4"/><path d="M5.2 5.6 L6.3 20.2 Q6.4 21.3 7.5 21.3 H14.5 Q15.6 21.3 15.7 20.2 L16.8 5.6" fill="none" stroke="#e5574a" stroke-width="1.6"/><line x1="9" y1="8.6" x2="9.2" y2="18.4" stroke="#e5574a" stroke-width="1.2"/><line x1="11" y1="8.6" x2="11" y2="18.4" stroke="#b8463c" stroke-width="1.2"/><line x1="13" y1="8.6" x2="12.8" y2="18.4" stroke="#e5574a" stroke-width="1.2"/></svg>
<div class="t" style="left:453px;top:1473.01px;font-size:18px;line-height:1.117;color:#e2e2e2;letter-spacing:0.2px;">Application Server<svg style="position:relative;display:inline-block;vertical-align:baseline;margin:0 15px 0 14px;" width="16" height="14" viewBox="0 0 16 14"><path d="M1 7 H14.5 M8.8 1.3 L14.5 7 L8.8 12.7" fill="none" stroke="#dcdcdc" stroke-width="1.8" stroke-linecap="round" stroke-linejoin="round"/></svg>Corporate LAN<span style="color:#9f9e9d;margin-left:15px;">(connected via)</span></div>
<svg style="left:2476px;top:1471.3px" width="26" height="26" viewBox="0 0 26 26"><circle cx="13" cy="13" r="10.5" fill="none" stroke="#3a7ff0" stroke-width="1.8"/><line x1="8.6" y1="17.4" x2="16.3" y2="9.7" stroke="#3a7ff0" stroke-width="1.6" stroke-linecap="round"/><circle cx="17.2" cy="8.8" r="0.9" fill="#3a7ff0"/></svg>
<svg style="left:2513px;top:1471.3px" width="22" height="24" viewBox="0 0 22 24"><path d="M3.5 5.3 H18.5" stroke="#e5574a" stroke-width="1.6" stroke-linecap="round"/><path d="M8.2 5 V3.8 Q8.2 2.5 9.5 2.5 H12.5 Q13.8 2.5 13.8 3.8 V5" fill="none" stroke="#e5574a" stroke-width="1.4"/><path d="M5.2 5.6 L6.3 20.2 Q6.4 21.3 7.5 21.3 H14.5 Q15.6 21.3 15.7 20.2 L16.8 5.6" fill="none" stroke="#e5574a" stroke-width="1.6"/><line x1="9" y1="8.6" x2="9.2" y2="18.4" stroke="#e5574a" stroke-width="1.2"/><line x1="11" y1="8.6" x2="11" y2="18.4" stroke="#b8463c" stroke-width="1.2"/><line x1="13" y1="8.6" x2="12.8" y2="18.4" stroke="#e5574a" stroke-width="1.2"/></svg>
<div class="t" style="left:453px;top:1510.51px;font-size:18px;line-height:1.117;color:#e2e2e2;letter-spacing:0.2px;">Load Balancer<svg style="position:relative;display:inline-block;vertical-align:baseline;margin:0 15px 0 14px;" width="16" height="14" viewBox="0 0 16 14"><path d="M1 7 H14.5 M8.8 1.3 L14.5 7 L8.8 12.7" fill="none" stroke="#dcdcdc" stroke-width="1.8" stroke-linecap="round" stroke-linejoin="round"/></svg>Web Server Cluster<span style="color:#9f9e9d;margin-left:15px;">(distributes to)</span></div>
<svg style="left:2476px;top:1508.8px" width="26" height="26" viewBox="0 0 26 26"><circle cx="13" cy="13" r="10.5" fill="none" stroke="#3a7ff0" stroke-width="1.8"/><line x1="8.6" y1="17.4" x2="16.3" y2="9.7" stroke="#3a7ff0" stroke-width="1.6" stroke-linecap="round"/><circle cx="17.2" cy="8.8" r="0.9" fill="#3a7ff0"/></svg>
<svg style="left:2513px;top:1508.8px" width="22" height="24" viewBox="0 0 22 24"><path d="M3.5 5.3 H18.5" stroke="#e5574a" stroke-width="1.6" stroke-linecap="round"/><path d="M8.2 5 V3.8 Q8.2 2.5 9.5 2.5 H12.5 Q13.8 2.5 13.8 3.8 V5" fill="none" stroke="#e5574a" stroke-width="1.4"/><path d="M5.2 5.6 L6.3 20.2 Q6.4 21.3 7.5 21.3 H14.5 Q15.6 21.3 15.7 20.2 L16.8 5.6" fill="none" stroke="#e5574a" stroke-width="1.6"/><line x1="9" y1="8.6" x2="9.2" y2="18.4" stroke="#e5574a" stroke-width="1.2"/><line x1="11" y1="8.6" x2="11" y2="18.4" stroke="#b8463c" stroke-width="1.2"/><line x1="13" y1="8.6" x2="12.8" y2="18.4" stroke="#e5574a" stroke-width="1.2"/></svg>
<div class="t" style="left:453px;top:1548.01px;font-size:18px;line-height:1.117;color:#e2e2e2;letter-spacing:0.2px;">Container Runtime<svg style="position:relative;display:inline-block;vertical-align:baseline;margin:0 15px 0 14px;" width="16" height="14" viewBox="0 0 16 14"><path d="M1 7 H14.5 M8.8 1.3 L14.5 7 L8.8 12.7" fill="none" stroke="#dcdcdc" stroke-width="1.8" stroke-linecap="round" stroke-linejoin="round"/></svg>Notification Service<span style="color:#9f9e9d;margin-left:15px;">(runs)</span></div>
<svg style="left:2476px;top:1546.3px" width="26" height="26" viewBox="0 0 26 26"><circle cx="13" cy="13" r="10.5" fill="none" stroke="#3a7ff0" stroke-width="1.8"/><line x1="8.6" y1="17.4" x2="16.3" y2="9.7" stroke="#3a7ff0" stroke-width="1.6" stroke-linecap="round"/><circle cx="17.2" cy="8.8" r="0.9" fill="#3a7ff0"/></svg>
<svg style="left:2513px;top:1546.3px" width="22" height="24" viewBox="0 0 22 24"><path d="M3.5 5.3 H18.5" stroke="#e5574a" stroke-width="1.6" stroke-linecap="round"/><path d="M8.2 5 V3.8 Q8.2 2.5 9.5 2.5 H12.5 Q13.8 2.5 13.8 3.8 V5" fill="none" stroke="#e5574a" stroke-width="1.4"/><path d="M5.2 5.6 L6.3 20.2 Q6.4 21.3 7.5 21.3 H14.5 Q15.6 21.3 15.7 20.2 L16.8 5.6" fill="none" stroke="#e5574a" stroke-width="1.6"/><line x1="9" y1="8.6" x2="9.2" y2="18.4" stroke="#e5574a" stroke-width="1.2"/><line x1="11" y1="8.6" x2="11" y2="18.4" stroke="#b8463c" stroke-width="1.2"/><line x1="13" y1="8.6" x2="12.8" y2="18.4" stroke="#e5574a" stroke-width="1.2"/></svg>
<div class="t" style="left:453px;top:1585.51px;font-size:18px;line-height:1.117;color:#e2e2e2;letter-spacing:0.2px;">NAS Storage<svg style="position:relative;display:inline-block;vertical-align:baseline;margin:0 15px 0 14px;" width="16" height="14" viewBox="0 0 16 14"><path d="M1 7 H14.5 M8.8 1.3 L14.5 7 L8.8 12.7" fill="none" stroke="#dcdcdc" stroke-width="1.8" stroke-linecap="round" stroke-linejoin="round"/></svg>Application Server<span style="color:#9f9e9d;margin-left:15px;">(provides storage)</span></div>
<svg style="left:2476px;top:1583.8px" width="26" height="26" viewBox="0 0 26 26"><circle cx="13" cy="13" r="10.5" fill="none" stroke="#3a7ff0" stroke-width="1.8"/><line x1="8.6" y1="17.4" x2="16.3" y2="9.7" stroke="#3a7ff0" stroke-width="1.6" stroke-linecap="round"/><circle cx="17.2" cy="8.8" r="0.9" fill="#3a7ff0"/></svg>
<svg style="left:2513px;top:1583.8px" width="22" height="24" viewBox="0 0 22 24"><path d="M3.5 5.3 H18.5" stroke="#e5574a" stroke-width="1.6" stroke-linecap="round"/><path d="M8.2 5 V3.8 Q8.2 2.5 9.5 2.5 H12.5 Q13.8 2.5 13.8 3.8 V5" fill="none" stroke="#e5574a" stroke-width="1.4"/><path d="M5.2 5.6 L6.3 20.2 Q6.4 21.3 7.5 21.3 H14.5 Q15.6 21.3 15.7 20.2 L16.8 5.6" fill="none" stroke="#e5574a" stroke-width="1.6"/><line x1="9" y1="8.6" x2="9.2" y2="18.4" stroke="#e5574a" stroke-width="1.2"/><line x1="11" y1="8.6" x2="11" y2="18.4" stroke="#b8463c" stroke-width="1.2"/><line x1="13" y1="8.6" x2="12.8" y2="18.4" stroke="#e5574a" stroke-width="1.2"/></svg>
<div class="r" style="left:1233px;top:1559px;width:93px;height:17px;border-radius:9px;background:#0b0b0b;border:1.2px solid #5a5a5a;"></div>
</div></div>
<svg style="left:1576px;top:16px" width="28" height="28" viewBox="0 0 28 28"><line x1="14" y1="14" x2="27.00" y2="14.00" stroke="#fff" stroke-width="1.8" stroke-linecap="round"/><line x1="14" y1="14" x2="25.26" y2="20.50" stroke="#fff" stroke-width="1.8" stroke-linecap="round"/><line x1="14" y1="14" x2="20.50" y2="25.26" stroke="#fff" stroke-width="1.8" stroke-linecap="round"/><line x1="14" y1="14" x2="14.00" y2="27.00" stroke="#fff" stroke-width="1.8" stroke-linecap="round"/><line x1="14" y1="14" x2="7.50" y2="25.26" stroke="#fff" stroke-width="1.8" stroke-linecap="round"/><line x1="14" y1="14" x2="2.74" y2="20.50" stroke="#fff" stroke-width="1.8" stroke-linecap="round"/><line x1="14" y1="14" x2="1.00" y2="14.00" stroke="#fff" stroke-width="1.8" stroke-linecap="round"/><line x1="14" y1="14" x2="2.74" y2="7.50" stroke="#fff" stroke-width="1.8" stroke-linecap="round"/><line x1="14" y1="14" x2="7.50" y2="2.74" stroke="#fff" stroke-width="1.8" stroke-linecap="round"/><line x1="14" y1="14" x2="14.00" y2="1.00" stroke="#fff" stroke-width="1.8" stroke-linecap="round"/><line x1="14" y1="14" x2="20.50" y2="2.74" stroke="#fff" stroke-width="1.8" stroke-linecap="round"/><line x1="14" y1="14" x2="25.26" y2="7.50" stroke="#fff" stroke-width="1.8" stroke-linecap="round"/><circle cx="14" cy="14" r="4" fill="#fff"/></svg>
<svg style="left:1640px;top:16px" width="30" height="28" viewBox="0 0 30 28"><circle cx="12" cy="4.5" r="3.8" fill="#fff"/><circle cx="22" cy="6.5" r="3.3" fill="#fff"/><rect x="17" y="11" width="11" height="15" rx="3" fill="#fff"/><rect x="1" y="11" width="16" height="15" rx="2.5" fill="#fff"/><text x="9" y="23" font-family="Liberation Sans" font-weight="700" font-size="11" fill="#9c8d78" text-anchor="middle">T</text></svg>
<svg style="left:1697px;top:15px" width="30" height="30" viewBox="0 0 30 30"><path d="M25 10 A12 12 0 1 0 13 25" fill="none" stroke="#fff" stroke-width="2"/><path d="M21 11 A8 8 0 1 0 13 21" fill="none" stroke="#fff" stroke-width="2"/><line x1="13" y1="9" x2="13" y2="15" stroke="#fff" stroke-width="2.4"/><rect x="17" y="19" width="11" height="8.5" rx="1.5" fill="#fff"/><path d="M19.5 19 V16.5 A3 3 0 0 1 25.5 16.5 V19" fill="none" stroke="#fff" stroke-width="1.8"/></svg>
<svg style="left:1756px;top:17px" width="30" height="27" viewBox="0 0 30 27"><rect x="1" y="1" width="27" height="25" rx="3.5" fill="none" stroke="#fff" stroke-width="1.8"/><path d="M1 4.5 Q1 1 4.5 1 H24.5 Q28 1 28 4.5 V7 H1 Z" fill="#fff"/><text x="14.5" y="22.5" font-family="Liberation Sans" font-size="14" fill="#fff" text-anchor="middle">22</text></svg>
<svg style="left:1822px;top:17px" width="28" height="27" viewBox="0 0 28 27"><circle cx="3.5" cy="3.5" r="3.2" fill="#fff" fill-opacity="0.35"/><circle cx="13.5" cy="3.5" r="3.2" fill="#fff" fill-opacity="0.35"/><circle cx="23.5" cy="3.5" r="3.2" fill="#fff" fill-opacity="0.35"/><circle cx="3.5" cy="13.0" r="3.2" fill="#fff" fill-opacity="1"/><circle cx="13.5" cy="13.0" r="3.2" fill="#fff" fill-opacity="1"/><circle cx="23.5" cy="13.0" r="3.2" fill="#fff" fill-opacity="1"/><circle cx="3.5" cy="22.5" r="3.2" fill="#fff" fill-opacity="0.35"/><circle cx="13.5" cy="22.5" r="3.2" fill="#fff" fill-opacity="1"/><circle cx="23.5" cy="22.5" r="3.2" fill="#fff" fill-opacity="0.35"/></svg>
<svg style="left:1880px;top:17px" width="24" height="27" viewBox="0 0 24 27"><path d="M3 3.5 L17 1.5 Q20 1.2 20 4 V22 Q20 25 17 25 H7 Q4.5 25 4.2 22.5 L2 5.5 Q1.8 3.7 3 3.5 Z" fill="none" stroke="#fff" stroke-width="2"/><rect x="17" y="9" width="5.5" height="8" rx="1.5" fill="#fff"/><circle cx="19.8" cy="13" r="1.2" fill="#9c8d78"/></svg>
<svg style="left:1934px;top:16px" width="30" height="28" viewBox="0 0 30 28"><circle cx="14.5" cy="14" r="12.3" fill="none" stroke="#fff" stroke-width="2.6"/><path d="M5.5 9 Q6.5 21 21 24.5" fill="none" stroke="#fff" stroke-width="2.4"/></svg>
<svg style="left:1993px;top:16px" width="28" height="28" viewBox="0 0 28 28"><g transform="translate(-9 0)"><circle cx="18" cy="8.8" r="7" fill="#fff" stroke="#a8996f" stroke-width="1.3"/><path d="M14.8 13 H21.2 V19.5 H23.2 V22 H21.2 V26.5 H14.8 Z" fill="#fff" stroke="#a8996f" stroke-width="1.3"/></g><g transform="translate(-4.5 0)"><circle cx="18" cy="8.8" r="7" fill="#fff" stroke="#a8996f" stroke-width="1.3"/><path d="M14.8 13 H21.2 V19.5 H23.2 V22 H21.2 V26.5 H14.8 Z" fill="#fff" stroke="#a8996f" stroke-width="1.3"/></g><g transform="translate(0 0)"><circle cx="18" cy="8.8" r="7" fill="#fff" stroke="#a8996f" stroke-width="1.3"/><path d="M14.8 13 H21.2 V19.5 H23.2 V22 H21.2 V26.5 H14.8 Z" fill="#fff" stroke="#a8996f" stroke-width="1.3"/></g><circle cx="18" cy="6.3" r="1.7" fill="#a8996f"/></svg>
<svg style="left:2054px;top:17px" width="28" height="27" viewBox="0 0 28 27"><path d="M1 8 L6 3 Q9 0.5 12 2 L9 5 L11 7 L8 10 L6 8 L3 11 Z" fill="#fff"/><line x1="8" y1="7" x2="21" y2="20" stroke="#fff" stroke-width="2.2"/><ellipse cx="23" cy="22.5" rx="3.2" ry="4" transform="rotate(-45 23 22.5)" fill="#fff"/></svg>
<svg style="left:2117px;top:16px" width="29" height="28" viewBox="0 0 29 28"><g transform="rotate(45 14.5 14)"><rect x="5" y="4.5" width="19" height="19" fill="none" stroke="#fff" stroke-width="2" stroke-dasharray="2.5 2"/><rect x="8" y="7.5" width="10" height="10" fill="#fff"/></g></svg>
<svg style="left:2180px;top:15px" width="32" height="31" viewBox="0 0 32 31"><rect x="0.5" y="0.5" width="30" height="29" rx="5" fill="#f6f3ec"/><rect x="3.5" y="7.5" width="24" height="19" rx="2" fill="#8e7f62"/><text x="15.5" y="25" font-family="Liberation Sans" font-weight="700" font-size="17" fill="#f6f3ec" text-anchor="middle">22</text></svg>
<svg style="left:2241px;top:16px" width="29" height="28" viewBox="0 0 29 28"><rect x="1.2" y="1.2" width="25.6" height="25.6" rx="5" fill="none" stroke="#fff" stroke-width="2.2"/><text x="14" y="22" font-family="Liberation Serif" font-weight="700" font-size="20" fill="#fff" text-anchor="middle">N</text></svg>
<svg style="left:2298px;top:17px" width="26" height="27" viewBox="0 0 26 27"><path d="M13 1.8 L23.8 9 L13 16.2 L2.2 9 Z" fill="none" stroke="#fff" stroke-width="2.5" stroke-linejoin="round"/><path d="M6.2 12.6 L2.2 15.6 L13 23.2 L23.8 15.6 L19.8 12.6" fill="none" stroke="#fff" stroke-width="2.5" stroke-linejoin="round"/></svg>
<svg style="left:2357px;top:20px" width="26" height="21" viewBox="0 0 26 21"><rect x="1" y="1" width="24" height="19" rx="2.5" fill="none" stroke="#fff" stroke-width="1.8"/><line x1="1" y1="5.5" x2="25" y2="5.5" stroke="#fff" stroke-width="1.5"/><circle cx="4" cy="3.2" r="0.8" fill="#fff"/><circle cx="6.5" cy="3.2" r="0.8" fill="#fff"/><circle cx="9" cy="3.2" r="0.8" fill="#fff"/><line x1="4.5" y1="9.5" x2="12" y2="9.5" stroke="#fff" stroke-width="1.4"/><line x1="4.5" y1="12.5" x2="12" y2="12.5" stroke="#fff" stroke-width="1.4"/><line x1="4.5" y1="15.5" x2="12" y2="15.5" stroke="#fff" stroke-width="1.4"/><path d="M15 9 L21 15 M21 9 L15 15" stroke="#fff" stroke-width="2"/></svg>
<svg style="left:2416px;top:18px" width="24" height="24" viewBox="0 0 24 24"><rect x="1" y="1.5" width="21" height="9" rx="4.5" fill="none" stroke="#fff" stroke-width="1.8"/><circle cx="5.5" cy="6" r="2.2" fill="#fff"/><rect x="0.5" y="12.5" width="22" height="10" rx="5" fill="#fff"/><circle cx="17.5" cy="17.5" r="2.6" fill="#9c8d78"/></svg>
</body></html>
